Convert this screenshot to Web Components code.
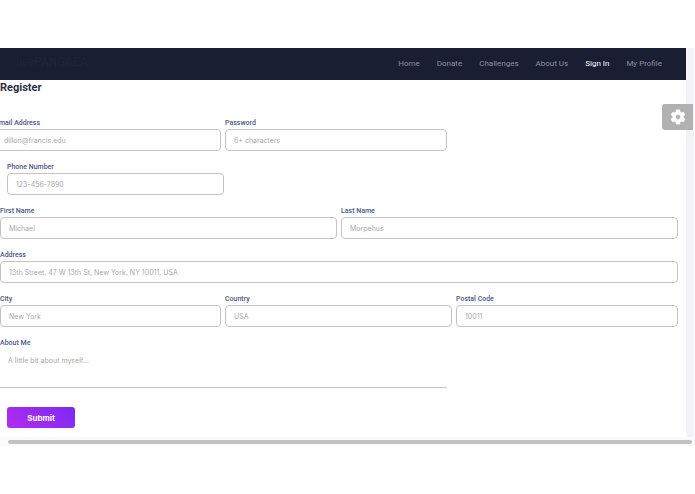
<!DOCTYPE html>
<html lang="en">
<head>
<meta charset="utf-8">
<title>Register</title>
<style>
  body {
    margin: 0;
    padding-top: 48px;
    background: #fff;
    font-family: Roboto, "Liberation Sans", sans-serif;
    overflow: hidden;
  }
</style>
</head>
<body>
<register-page>
  <site-nav slot="nav" brand="livePANGAEA">
    <nav-link href="#home">Home</nav-link>
    <nav-link href="#donate">Donate</nav-link>
    <nav-link href="#challenges">Challenges</nav-link>
    <nav-link href="#about">About Us</nav-link>
    <nav-link href="#signin" active>Sign In</nav-link>
    <nav-link href="#profile">My Profile</nav-link>
  </site-nav>
  <form-row style="--cols: 221fr 222fr 227fr">
    <text-field label="Email Address" type="email" placeholder="dillon@francis.edu" bleed></text-field>
    <text-field label="Password" type="password" placeholder="6+ characters"></text-field>
  </form-row>
  <form-row style="--cols: 217fr 450fr" inset>
    <text-field label="Phone Number" type="tel" placeholder="123-456-7890"></text-field>
  </form-row>
  <form-row style="--cols: 1fr 1fr">
    <text-field label="First Name" placeholder="Michael"></text-field>
    <text-field label="Last Name" placeholder="Morpehus"></text-field>
  </form-row>
  <form-row>
    <text-field label="Address" placeholder="13th Street, 47 W 13th St, New York, NY 10011, USA"></text-field>
  </form-row>
  <form-row style="--cols: 221fr 227fr 222fr">
    <text-field label="City" placeholder="New York"></text-field>
    <text-field label="Country" placeholder="USA"></text-field>
    <text-field label="Postal Code" placeholder="10011"></text-field>
  </form-row>
  <form-row style="--cols: 447fr 227fr">
    <text-field label="About Me" placeholder="A little bit about myself..." multiline></text-field>
  </form-row>
  <submit-button>Submit</submit-button>
</register-page>

<script>
class RegisterPage extends HTMLElement {
  constructor() {
    super();
    this.attachShadow({ mode: "open" }).innerHTML = `
      <style>
        :host { display: block; position: relative; }
        .page {
          padding-right: 8px;
          margin-right: 1px;
          background: #f1f3f9;
        }
        .content { background: #fff; padding-bottom: 9px; }
        h1 {
          margin: 0 0 19px;
          font-size: 11px;
          line-height: 16px;
          font-weight: 700;
          color: #2c3048;
        }
        .form {
          display: grid;
          gap: 8px;
          padding-right: 8px;
        }
        .track {
          padding: 3px 3px 2px 8px;
          background: #fafafa;
        }
        .thumb {
          height: 4px;
          border-radius: 2px;
          background: #c1c1c1;
        }
        settings-button { position: absolute; top: 56px; right: 2px; }
      </style>
      <div class="page">
        <div class="content">
          <slot name="nav"></slot>
          <h1>Register</h1>
          <form class="form"><slot></slot></form>
        </div>
      </div>
      <div class="track"><div class="thumb"></div></div>
      <settings-button></settings-button>
    `;
  }
}

class SiteNav extends HTMLElement {
  constructor() {
    super();
    this.attachShadow({ mode: "open" }).innerHTML = `
      <style>
        :host {
          display: flex;
          align-items: flex-start;
          justify-content: space-between;
          height: 32px;
          padding: 0 24px 0 16px;
          box-sizing: border-box;
          background: #1a1e33;
        }
        .brand {
          font-size: 12px;
          line-height: 28px;
          color: #1f2339;
          text-decoration: none;
        }
        nav { display: flex; gap: 17px; }
      </style>
      <a class="brand" href="#top"></a>
      <nav><slot></slot></nav>
    `;
  }

  connectedCallback() {
    this.shadowRoot.querySelector(".brand").textContent = this.getAttribute("brand");
  }
}

class NavLink extends HTMLElement {
  constructor() {
    super();
    this.attachShadow({ mode: "open" }).innerHTML = `
      <style>
        :host {
          display: block;
          font-size: 8px;
          line-height: 32px;
        }
        a {
          color: #8e909b;
          text-decoration: none;
          white-space: nowrap;
        }
        :host([active]) a { color: #fff; }
      </style>
      <a><slot></slot></a>
    `;
  }

  connectedCallback() {
    this.shadowRoot.querySelector("a").href = this.getAttribute("href");
  }
}

class FormRow extends HTMLElement {
  constructor() {
    super();
    this.attachShadow({ mode: "open" }).innerHTML = `
      <style>
        :host {
          display: grid;
          grid-template-columns: var(--cols, 1fr);
          gap: 4px;
        }
        :host([inset]) { padding-left: 7px; }
      </style>
      <slot></slot>
    `;
  }
}

class TextField extends HTMLElement {
  connectedCallback() {
    const placeholder = this.getAttribute("placeholder");
    const control = this.hasAttribute("multiline")
      ? `<textarea id="control" placeholder="${placeholder}"></textarea>`
      : `<input id="control" type="${this.getAttribute("type") || "text"}" placeholder="${placeholder}">`;

    this.attachShadow({ mode: "open" }).innerHTML = `
      <style>
        :host { display: block; min-width: 0; }
        :host([bleed]) { margin-left: -5px; }
        label {
          display: block;
          padding-top: 2px;
          font-size: 7px;
          line-height: 12px;
          font-weight: 500;
          color: #4f5584;
          white-space: nowrap;
        }
        input, textarea {
          display: block;
          box-sizing: border-box;
          width: 100%;
          height: 22px;
          margin: 0;
          padding: 0 8px;
          border: 1px solid #c4c4c4;
          border-radius: 4px;
          background: #fff;
          font: 7px Inter, sans-serif;
          outline: none;
        }
        textarea {
          height: 39px;
          padding: 7px 8px;
          border-width: 0 0 1px;
          border-radius: 0;
          resize: none;
        }
        ::placeholder { color: #a9a9a9; opacity: 1; }
      </style>
      <label for="control">${this.getAttribute("label")}</label>
      ${control}
    `;
  }
}

class SubmitButton extends HTMLElement {
  constructor() {
    super();
    this.attachShadow({ mode: "open" }).innerHTML = `
      <style>
        :host { display: block; padding: 11px 0 0 7px; }
        button {
          display: block;
          width: 68px;
          height: 21px;
          padding: 0;
          border: 0;
          border-radius: 3px;
          background: linear-gradient(35deg, #b52bee, #7a2af5);
          color: #fff;
          font: 700 8px Inter, sans-serif;
        }
      </style>
      <button type="button"><slot></slot></button>
    `;
  }
}

class SettingsButton extends HTMLElement {
  constructor() {
    super();
    this.attachShadow({ mode: "open" }).innerHTML = `
      <style>
        :host { display: block; }
        button {
          display: flex;
          align-items: center;
          justify-content: center;
          width: 31px;
          height: 26px;
          padding: 0;
          border: 0;
          border-radius: 3px 0 0 3px;
          background: #b1b1b2;
        }
      </style>
      <button type="button" aria-label="Settings">
        <svg width="18" height="18" viewBox="0 0 24 24" fill="#fff">
          <path d="M19.14 12.94c.04-.3.06-.61.06-.94s-.02-.64-.07-.94l2.03-1.58a.49.49 0 0 0 .12-.61l-1.92-3.32a.49.49 0 0 0-.59-.22l-2.39.96a7 7 0 0 0-1.62-.94l-.36-2.54a.48.48 0 0 0-.48-.41h-3.84a.48.48 0 0 0-.47.41l-.36 2.54a7.3 7.3 0 0 0-1.62.94l-2.39-.96a.48.48 0 0 0-.59.22L2.74 8.87a.48.48 0 0 0 .12.61l2.03 1.58c-.05.3-.09.63-.09.94s.02.64.07.94l-2.03 1.58a.49.49 0 0 0-.12.61l1.92 3.32c.12.22.37.29.59.22l2.39-.96c.5.38 1.03.7 1.62.94l.36 2.54c.05.24.24.41.48.41h3.84c.24 0 .44-.17.47-.41l.36-2.54a7 7 0 0 0 1.62-.94l2.39.96c.22.08.47 0 .59-.22l1.92-3.32a.48.48 0 0 0-.12-.61zM12 15.2a3.2 3.2 0 1 1 0-6.4 3.2 3.2 0 0 1 0 6.4z" stroke="#fff" stroke-width=".6" stroke-linejoin="round"/>
        </svg>
      </button>
    `;
  }
}

customElements.define("register-page", RegisterPage);
customElements.define("site-nav", SiteNav);
customElements.define("nav-link", NavLink);
customElements.define("form-row", FormRow);
customElements.define("text-field", TextField);
customElements.define("submit-button", SubmitButton);
customElements.define("settings-button", SettingsButton);
</script>
</body>
</html>
